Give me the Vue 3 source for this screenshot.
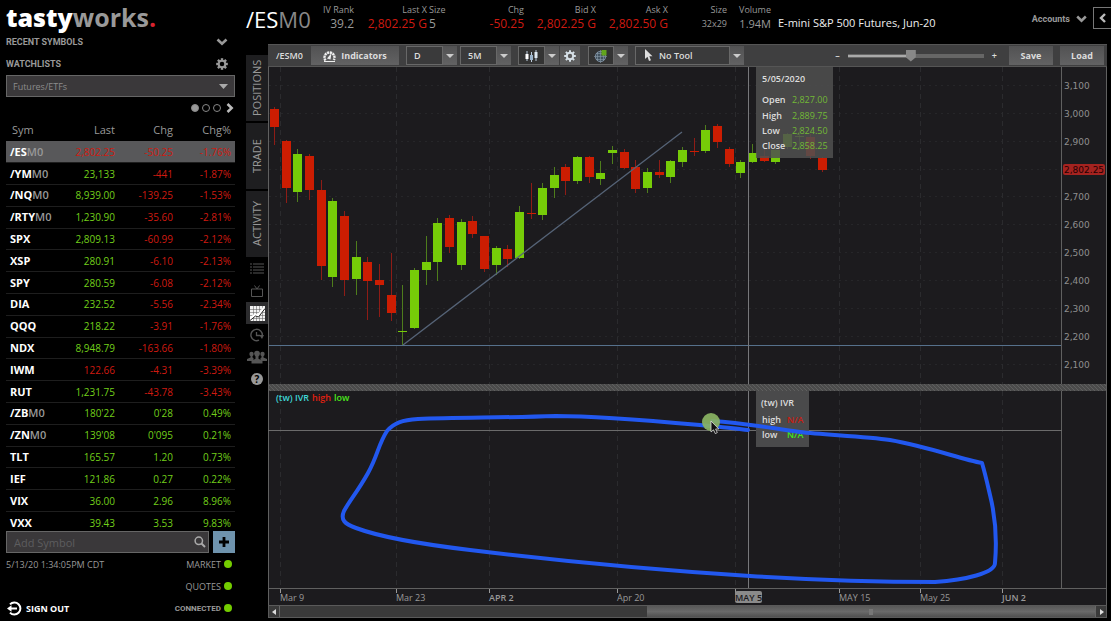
<script setup>
import { ref } from 'vue'

const watchlist = ref('Futures/ETFs')
const aggregation = ref('D')
const range = ref('5M')
const tool = ref('No Tool')
const zoom = ref(46)

const quotes = [
  ['/ES', 'M0', '2,802.25', '-50.25', '-1.76%', 'down', 'down'],
  ['/YM', 'M0', '23,133', '-441', '-1.87%', 'up', 'down'],
  ['/NQ', 'M0', '8,939.00', '-139.25', '-1.53%', 'up', 'down'],
  ['/RTY', 'M0', '1,230.90', '-35.60', '-2.81%', 'up', 'down'],
  ['SPX', '', '2,809.13', '-60.99', '-2.12%', 'up', 'down'],
  ['XSP', '', '280.91', '-6.10', '-2.13%', 'up', 'down'],
  ['SPY', '', '280.59', '-6.08', '-2.12%', 'up', 'down'],
  ['DIA', '', '232.52', '-5.56', '-2.34%', 'up', 'down'],
  ['QQQ', '', '218.22', '-3.91', '-1.76%', 'up', 'down'],
  ['NDX', '', '8,948.79', '-163.66', '-1.80%', 'up', 'down'],
  ['IWM', '', '122.66', '-4.31', '-3.39%', 'down', 'down'],
  ['RUT', '', '1,231.75', '-43.78', '-3.43%', 'up', 'down'],
  ['/ZB', 'M0', "180'22", "0'28", '0.49%', 'up', 'up'],
  ['/ZN', 'M0', "139'08", "0'095", '0.21%', 'up', 'up'],
  ['TLT', '', '165.57', '1.20', '0.73%', 'up', 'up'],
  ['IEF', '', '121.86', '0.27', '0.22%', 'up', 'up'],
  ['VIX', '', '36.00', '2.96', '8.96%', 'up', 'up'],
  ['VXX', '', '39.43', '3.53', '9.83%', 'up', 'up'],
].map(([root, month, last, chg, pct, lastDir, chgDir]) => ({ root, month, last, chg, pct, lastDir, chgDir }))

// direction, high, body top, body bottom, low
const candles = [
  ['r', 107, 109, 127, 145], ['r', 140, 141, 188, 203], ['g', 149, 154, 192, 202], ['r', 154, 156, 190, 200],
  ['r', 180, 190, 266, 280], ['g', 198, 201, 277, 287], ['r', 211, 216, 280, 296], ['g', 241, 257, 279, 295],
  ['r', 257, 262, 281, 320], ['r', 264, 280, 285, 317], ['r', 253, 295, 313, 321], ['g', 285, 331, 332, 346],
  ['g', 268, 270, 328, 329], ['g', 236, 262, 270, 285], ['g', 218, 223, 262, 281], ['r', 215, 218, 247, 253],
  ['g', 219, 222, 265, 270], ['r', 216, 221, 234, 238], ['r', 236, 236, 269, 272], ['g', 246, 248, 265, 275],
  ['r', 245, 249, 259, 267], ['g', 206, 212, 258, 259], ['r', 183, 213, 214, 219], ['g', 183, 188, 215, 220],
  ['g', 167, 175, 188, 198], ['r', 164, 167, 181, 195], ['g', 156, 157, 181, 184], ['r', 156, 157, 177, 183],
  ['g', 161, 173, 179, 185], ['g', 146, 150, 153, 164], ['r', 149, 152, 168, 169], ['r', 160, 167, 189, 193],
  ['g', 168, 172, 188, 193], ['r', 160, 172, 175, 178], ['g', 160, 161, 177, 183], ['g', 147, 150, 162, 167],
  ['r', 138, 151, 152, 156], ['g', 125, 130, 151, 153], ['r', 124, 126, 142, 148], ['r', 147, 149, 164, 167],
  ['g', 160, 162, 173, 178], ['g', 144, 153, 162, 163], ['r', 148, 156, 161, 162], ['g', 147, 150, 162, 164],
  ['g', 133, 134, 147, 149], ['g', 128, 136, 137, 150], ['r', 134, 137, 156, 159], ['r', 157, 158, 170, 172],
].map(([dir, high, top, bottom, low], i) => ({ dir, high, top, bottom, low, x: 274 + Math.round((i * 548) / 47) }))

const prices = [
  ['3,100', 86], ['3,000', 114], ['2,900', 142], ['2,800', 170], ['2,700', 197], ['2,600', 225],
  ['2,500', 253], ['2,400', 281], ['2,300', 309], ['2,200', 337], ['2,100', 365],
]
const dates = [
  ['Mar 9', 280], ['Mar 23', 396], ['APR 2', 489, true], ['Apr 20', 617],
  ['MAY 5', 735, true], ['MAY 15', 839], ['May 25', 920], ['JUN 2', 1002, true],
]
const ohlc = [['Open', '2,827.00', 103], ['High', '2,889.75', 119], ['Low', '2,824.50', 134], ['Close', '2,858.25', 149]]
</script>

<template>
  <div class="app">
    <aside class="sidebar">
      <div class="logo"><b>tasty</b><span>works</span><i>.</i></div>
      <button class="section">RECENT SYMBOLS
        <svg width="12" height="8" viewBox="0 0 12 8"><path d="M1.5 1.5 6 5.7l4.500-4.200" fill="none" stroke="#999" stroke-width="2.600" /></svg>
      </button>
      <button class="section">WATCHLISTS
        <svg width="12" height="12" viewBox="-6 -6 12 12">
          <circle r="3.300" fill="none" stroke="#999" stroke-width="2" />
          <path v-for="a in 8" :key="a" :transform="`rotate(${a * 45})`" d="M-1.200-5.800h2.400v2.400h-2.400z" fill="#999" />
        </svg>
      </button>
      <div class="list-select">
        <select v-model="watchlist" aria-label="Watchlist"><option>Futures/ETFs</option></select>
        <svg width="9" height="5" viewBox="0 0 9 5"><path d="M0 0h9L4.500 5z" fill="#aaa" /></svg>
      </div>
      <div class="pager">
        <button class="dot on" aria-label="Page 1"></button>
        <button class="dot" aria-label="Page 2"></button>
        <button class="dot" aria-label="Page 3"></button>
        <button class="next" aria-label="Next page">
          <svg width="8" height="10" viewBox="0 0 8 10"><path d="M1.500 1 5.700 5 1.500 9" fill="none" stroke="#bbb" stroke-width="2.500" /></svg>
        </button>
      </div>
      <div class="quotes">
        <table>
          <thead>
            <tr><th class="sym">Sym</th><th>Last</th><th>Chg</th><th>Chg%</th></tr>
          </thead>
          <tbody>
            <tr v-for="(q, i) in quotes" :key="q.root" :class="{ selected: i === 0 }">
              <td class="sym">{{ q.root }}<span>{{ q.month }}</span></td>
              <td :class="q.lastDir">{{ q.last }}</td>
              <td :class="q.chgDir">{{ q.chg }}</td>
              <td :class="q.chgDir">{{ q.pct }}</td>
            </tr>
          </tbody>
        </table>
      </div>
      <div class="add">
        <div class="add-box">
          <input type="text" placeholder="Add Symbol" aria-label="Add Symbol" />
          <svg width="12" height="12" viewBox="0 0 12 12"><circle cx="4.800" cy="4.800" r="3.700" fill="none" stroke="#aaa" stroke-width="1.500" /><path d="M7.500 7.500 11 11" stroke="#aaa" stroke-width="2" /></svg>
        </div>
        <button class="plus" aria-label="Add">
          <svg width="10" height="10" viewBox="0 0 10 10"><path d="M5 0v10M0 5h10" stroke="#000" stroke-width="2.800" /></svg>
        </button>
      </div>
      <div class="status"><span>5/13/20 1:34:05PM CDT</span><span class="state">MARKET<i></i></span></div>
      <div class="status"><span></span><span class="state">QUOTES<i></i></span></div>
      <div class="status">
        <button class="signout">
          <svg width="15" height="15" viewBox="0 0 15 15"><path d="M3 3.400A6 6 0 1 1 3 11.600" fill="none" stroke="#fff" stroke-width="2" /><path d="M10 7.500H2.500" stroke="#fff" stroke-width="2" /><path d="M4.500 4.200v6.600L0 7.500z" fill="#fff" /></svg>
          SIGN OUT
        </button>
        <span class="state narrow">CONNECTED<i></i></span>
      </div>
    </aside>

    <main>
      <header>
        <h1>/ES<span>M0</span></h1>
        <div class="stat iv"><small>IV Rank</small><b>39.2</b></div>
        <div class="stat last"><small>Last X</small><b class="down">2,802.25 G</b></div>
        <div class="stat lsize"><small>Size</small><b>5</b></div>
        <div class="stat chg"><small>Chg</small><b class="down">-50.25</b></div>
        <div class="stat px"><small>Bid X</small><b class="down">2,802.25 G</b></div>
        <div class="stat px"><small>Ask X</small><b class="down">2,802.50 G</b></div>
        <div class="stat size"><small>Size</small><b class="tiny">32x29</b></div>
        <div class="stat vol"><small>Volume</small><b>1.94M</b></div>
        <div class="name">E-mini S&amp;P 500 Futures, Jun-20</div>
        <button class="accounts">Accounts
          <svg width="11" height="8" viewBox="0 0 11 8"><path d="M1.200 1.500 5.500 5.700l4.300-4.200" fill="none" stroke="#999" stroke-width="2.500" /></svg>
        </button>
        <button class="collapse" aria-label="Show panel">
          <svg width="7" height="10" viewBox="0 0 7 10"><path d="M6 1 2 5l4 4" fill="none" stroke="#bbb" stroke-width="2.400" /></svg>
        </button>
      </header>

      <div class="work">
        <nav>
          <button class="tab">POSITIONS</button>
          <button class="tab">TRADE</button>
          <button class="tab">ACTIVITY</button>
          <button class="icon" aria-label="Grid">
            <svg width="14" height="12" viewBox="0 0 14 12"><path d="M0 1h2M3 1h11M0 4h2M3 4h11M0 7h2M3 7h11M0 10h2M3 10h11" stroke="#555" /></svg>
          </button>
          <button class="icon" aria-label="Video">
            <svg width="12" height="12" viewBox="0 0 12 12"><path d="M.500 4h11v7.500H.500zM3.500.500 6 4 8.500.500" fill="none" stroke="#555" /></svg>
          </button>
          <button class="icon active" aria-label="Chart">
            <svg width="15" height="15" viewBox="0 0 15 15"><path d="M0 0h15v15H0z" fill="#f2f2f2" /><path d="M3.500 0v15M6.500 0v15M9.500 0v15M12.500 0v15M0 3.500h15M0 6.500h15M0 9.500h15M0 12.500h15" stroke="#555" stroke-width=".500" /><path d="m0 13 5-4 3 1 6-8" fill="none" stroke="#fff" stroke-width="2.500" /><path d="m0 14.500 5.500-4.500 3 1L15 2.500" fill="none" stroke="#222" /></svg>
          </button>
          <button class="icon" aria-label="History">
            <svg width="14" height="14" viewBox="0 0 14 14"><path d="M12.300 7.500A5.700 5.700 0 1 0 9 12.200" fill="none" stroke="#555" stroke-width="1.400" /><path d="M9.300 7H14l-2 4z" fill="#555" /><path d="M6.500 4v3.500H10" fill="none" stroke="#555" stroke-width="1.300" /></svg>
          </button>
          <button class="icon" aria-label="People">
            <svg width="20" height="14" viewBox="0 0 20 14" fill="#555"><circle cx="4.500" cy="4" r="2.200" /><circle cx="15.500" cy="4" r="2.200" /><path d="M0 11V9l3.500-1.500V5h2v2.500l1 .500V11zM20 11V9l-3.500-1.500V5h-2v2.500l-1 .500V11z" /><circle cx="10" cy="3.600" r="2.900" /><path d="M4.500 13.500v-2.700l4-2V6h3v2.800l4 2v2.700z" /></svg>
          </button>
          <button class="icon" aria-label="Help"><span class="help">?</span></button>
        </nav>

        <section class="panel">
          <div class="toolbar">
            <span class="ticker">/ESM0</span>
            <button class="btn indicators">
              <svg width="13" height="12" viewBox="0 0 13 12"><path d="M2.500 10.500A5 5 0 1 1 10.800 10" fill="none" stroke="#eee" stroke-width="2.400" stroke-dasharray="2.200 .600" /><path d="M4 8.500 8.500 3l-1 6.500z" fill="#eee" /><path d="M1 11.500h11" stroke="#eee" /></svg>
              Indicators
            </button>
            <div class="combo agg">
              <select v-model="aggregation" aria-label="Aggregation"><option>D</option></select>
              <span class="arrow"></span>
            </div>
            <div class="combo rng">
              <select v-model="range" aria-label="Range"><option>5M</option></select>
              <span class="arrow"></span>
            </div>
            <div class="split style">
              <button class="face" aria-label="Chart style">
                <svg width="13" height="12" viewBox="0 0 13 12"><path d="M2 1v10M6.500 2v10M11 0v11" stroke="#bcd" /><path d="M.500 4h3v5h-3z" fill="#fff" /><path d="M5 5h3v5H5z" fill="#9ab4cc" /><path d="M9.500 2h3v6h-3z" fill="#dde8f2" /></svg>
              </button>
              <button class="arrow" aria-label="More styles"></button>
            </div>
            <button class="btn gear" aria-label="Settings">
              <svg width="12" height="12" viewBox="-6 -6 12 12"><circle r="3.200" fill="none" stroke="#d6e0e8" stroke-width="2" /><path v-for="a in 8" :key="a" :transform="`rotate(${a * 45})`" d="M-1-5.800h2v2.400h-2z" fill="#d6e0e8" /></svg>
            </button>
            <div class="split cross">
              <button class="face" aria-label="Crosshair">
                <svg width="14" height="14" viewBox="0 0 14 14"><circle cx="6.500" cy="7.500" r="5.200" fill="#42525f" stroke="#789" /><path d="M6.500 1v13M0 7.500h13M3.500 3v9M9.500 3v9M2 4.500h9M2 10.500h9" stroke="#8a9aa8" stroke-width=".600" /><path d="M7.500 1h5v5.500h-5z" fill="#62a51c" /></svg>
              </button>
              <button class="arrow" aria-label="More crosshairs"></button>
            </div>
            <div class="combo tool">
              <svg class="pointer" width="9" height="13" viewBox="0 0 9 13"><path d="M1 0v10l2.500-2.200L5 12l2-.800-1.700-4H8.500z" fill="#ddd" /></svg>
              <select v-model="tool" aria-label="Drawing tool"><option>No Tool</option></select>
              <span class="arrow"></span>
            </div>
            <div class="zoomer">
              <button aria-label="Zoom out">–</button>
              <input v-model="zoom" type="range" min="0" max="100" aria-label="Zoom" />
              <button aria-label="Zoom in">+</button>
            </div>
            <button class="btn action">Save</button>
            <button class="btn action">Load</button>
          </div>

          <svg class="chart" viewBox="268 67 839 538" role="img" aria-label="/ESM0 price chart">
            <defs>
              <pattern id="grip" width="4" height="4" patternUnits="userSpaceOnUse"><path d="M0 0h4v4H0z" fill="#4b4b4b" /><path d="m0 0 4 4" stroke="#606060" /></pattern>
            </defs>
            <path d="M268 67h839v538H268z" fill="#1c1b1e" />
            <g stroke="#2b2b2e">
              <path v-for="p in prices" :key="p[0]" :d="`M269 ${p[1] - 0.5}H1062`" stroke-dasharray="2 4" opacity=".7" />
              <path v-for="d in dates" :key="d[0]" :d="`M${d[1] + 0.5} 67V588`" stroke-dasharray="5 4" />
            </g>
            <g v-for="c in candles" :key="c.x" :class="c.dir">
              <path :d="`M${c.x + 0.5} ${c.high}V${c.low}`" class="wick" />
              <rect :x="c.x - 4" :y="c.top" width="9" :height="c.bottom - c.top" class="body" />
            </g>
            <path d="M403 345 682 132" stroke="#566478" stroke-width="1.300" />
            <path d="M268 345.500H1062" stroke="#56718c" />
            <path d="M748.500 67V588" stroke="#77777a" />
            <path d="M268 384h839v7H268z" fill="url(#grip)" />
            <path d="M268 391V588.500H1107M268.500 67V605M1061.500 67V384M1061.500 391V588.500M1106.500 67V605" fill="none" stroke="#606060" />
            <path d="M268 430.500H1062" stroke="#6b6b6b" />

            <g class="axis">
              <template v-for="p in prices" :key="p[0]">
                <text v-if="p[0] !== '2,800'" x="1064" :y="p[1] + 3">{{ p[0] }}</text>
              </template>
            </g>
            <rect x="1063" y="164" width="42" height="11" rx="2" fill="#a52320" />
            <text x="1064" y="173" class="tag">2,802.25</text>

            <g>
              <path v-for="d in dates" :key="d[0]" :d="`M${d[1] + 0.5} 589v4`" stroke="#999" />
              <rect x="735" y="591" width="27" height="12" rx="2" fill="#8a8a8a" />
              <text v-for="d in dates" :key="d[0]" :x="d[1]" y="601" :class="['date', { major: d[2], current: d[0] === 'MAY 5' }]">{{ d[0] }}</text>
            </g>

            <g class="legend">
              <text x="276" y="401" fill="#3fd6d6">(tw) IVR</text>
              <text x="312" y="401" fill="#e02010">high</text>
              <text x="334" y="401" fill="#4be81c">low</text>
            </g>

            <rect x="756" y="67" width="77" height="91" fill="#505050" opacity=".85" />
            <g class="tip">
              <text x="762" y="82">5/05/2020</text>
              <template v-for="o in ohlc" :key="o[0]">
                <text x="762" :y="o[2]">{{ o[0] }}</text>
                <text x="792" :y="o[2]" class="value">{{ o[1] }}</text>
              </template>
            </g>
            <rect x="756" y="391" width="53" height="56" fill="#4a4a4b" />
            <g class="tip">
              <text x="761" y="406">(tw) IVR</text>
              <text x="762" y="423">high</text><text x="787" y="423" class="high">N/A</text>
              <text x="762" y="438">low</text><text x="787" y="438" class="low">N/A</text>
            </g>

            <path
              d="M748 430 C735 428 722 427 700 425 C655 421 590 416 556 416 C500 418 455 417 418 419 C402 420 394 423 387 431 C378 445 378 455 368 473 C358 491 350 500 344 511 C340 520 345 524 356 528 C380 537 420 544 470 550 C560 561 640 569 750 576 C815 580 880 582 935 582 C965 580 995 573 995 563 C997 540 995 515 990 495 C987 482 985 473 982 463 C960 459 930 447 890 440 C865 436 825 435 800 432 C770 428 745 423 712 421"
              fill="none" stroke="#2258ef" stroke-width="4" stroke-linecap="round" stroke-linejoin="round" />
            <circle cx="711" cy="422" r="9" fill="#8ab463" opacity=".92" />
            <path d="M711 421v11l2.500-2.200 1.800 3.800 2-1-1.700-3.600h3.200z" fill="#111" stroke="#ddd" stroke-width=".800" />
          </svg>

          <div class="scroll">
            <button aria-label="Scroll left"><svg width="5" height="6" viewBox="0 0 5 6"><path d="M4 0v6L0 3z" fill="#ddd" /></svg></button>
            <div class="track"><div class="thumb"><i></i></div></div>
            <button aria-label="Scroll right"><svg width="5" height="6" viewBox="0 0 5 6"><path d="M1 0v6l4-3z" fill="#ddd" /></svg></button>
          </div>
        </section>
      </div>
    </main>
  </div>
</template>

<style>
body { background: #000; }
</style>

<style scoped>
.app { display: flex; min-height: 100vh; background: #000; color: #999; font-family: "Open Sans", "Noto Sans", sans-serif; font-size: 10px; overflow: hidden; }
.app *, .app { box-sizing: border-box; }
button { padding: 0; border: 0; background: none; color: inherit; font: inherit; cursor: pointer; }
select, input { font: inherit; color: inherit; appearance: none; border-radius: 0; margin: 0; }
svg { display: block; flex: none; }
.up { color: #72cf1a; }
.down { color: #cf1a10; }

.sidebar { flex: 0 0 246px; padding: 0 11px 0 6px; display: flex; flex-direction: column; }
.logo { height: 34px; margin-bottom: -3px; font-size: 25px; line-height: 34px; font-weight: 700; white-space: nowrap; color: #999; }
.logo b { color: #fff; }
.logo i { color: #d8232f; font-style: normal; }
.section { display: flex; align-items: center; justify-content: space-between; height: 22px; padding-right: 7px; font-family: Roboto, "Open Sans", sans-serif; font-size: 9px; font-weight: 700; color: #999; }
.list-select { position: relative; height: 22px; }
.list-select select { width: 100%; height: 22px; padding: 0 6px; border: 1px solid #666; background: #3a383a; color: #8c8c8c; font-size: 9px; }
.list-select svg { position: absolute; right: 7px; top: 9px; pointer-events: none; }
.pager { display: flex; align-items: center; justify-content: flex-end; gap: 3px; height: 22px; padding-right: 1px; }
.dot { width: 8px; height: 8px; border: 1px solid #888; border-radius: 50%; }
.dot.on { background: #999; }
.next { margin-left: 2px; }
.quotes { height: 412px; overflow: hidden; }
table { width: 100%; height: 414px; border-collapse: collapse; table-layout: fixed; }
thead tr { height: 22px; }
th, td { padding: 0 4px 0 0; text-align: right; line-height: 18px; font-weight: 400; }
th { font-size: 11px; color: #999; width: 58px; }
td { border-top: 1px solid #1e1e1e; }
th.sym { width: auto; padding-left: 6px; text-align: left; }
td.sym { padding-left: 4px; text-align: left; font-size: 11px; font-weight: 700; color: #fff; }
td.sym span { color: #999; font-weight: 600; }
.selected td { background: #58585a; border-color: #58585a; }
.add { display: flex; gap: 4px; }
.add-box { flex: 1; display: flex; align-items: center; padding-right: 2px; border: 1px solid #666; background: #3a383a; }
.add input { flex: 1; min-width: 0; height: 20px; padding: 0 7px; border: 0; background: none; font-size: 11px; }
.add input::placeholder { color: #5d5d5f; opacity: 1; }
.plus { display: grid; place-items: center; width: 22px; height: 22px; background: #6f93ad; }
.status { display: flex; align-items: center; justify-content: space-between; height: 22px; font-size: 9px; }
.state { display: flex; align-items: center; gap: 3px; padding-right: 3px; }
.state i { width: 8px; height: 8px; border-radius: 50%; background: #74cc00; }
.narrow { font-family: Roboto, "Open Sans", sans-serif; font-size: 8px; font-weight: 700; }
.signout { display: flex; align-items: center; gap: 4px; margin-left: 1px; color: #fff; font-weight: 700; }

main { flex: 1; min-width: 0; }
header { display: flex; height: 44px; padding-top: 3px; white-space: nowrap; }
h1 { margin: 0; flex: 0 0 66px; font-size: 22px; line-height: 32px; font-weight: 400; color: #fff; }
h1 span { color: #888; }
.stat { display: flex; flex-direction: column; align-items: flex-end; flex: none; }
.stat small { font-size: 9px; line-height: 13px; }
.stat b { font-size: 12px; line-height: 15px; font-weight: 400; }
.stat b.tiny { font-size: 9px; }
.iv { width: 42px; }
.last { width: 73px; }
.lsize { width: 20px; align-items: flex-start; padding-left: 2px; }
.chg { width: 77px; }
.px { width: 72px; }
.size { width: 59px; }
.vol { width: 44px; }
.vol b { font-size: 11px; }
.name { margin-left: 7px; padding-top: 11px; font-size: 11px; line-height: 18px; color: #eee; }
.accounts { display: flex; align-items: center; gap: 6px; height: 32px; margin-left: auto; font-family: Roboto, "Open Sans", sans-serif; font-size: 9px; font-weight: 700; }
.collapse { display: grid; place-items: center; width: 18px; height: 22px; margin: 4px 0 0 6px; border: 1px solid #777; border-right: 0; }

.work { display: flex; }
nav { flex: 0 0 22px; display: flex; flex-direction: column; padding-top: 11px; }
.tab { writing-mode: vertical-rl; transform: rotate(180deg); width: 22px; height: 66px; margin-bottom: 2px; background: #1e1e20; color: #999; font-size: 11px; line-height: 22px; }
.icon { display: grid; place-items: center; height: 22px; }
.tab + .icon { margin-top: -1px; }
.active { background: #2c2c2e; }
.help { width: 12px; height: 12px; border-radius: 50%; background: #999; color: #000; font-size: 10px; line-height: 12px; font-weight: 700; }

.panel { flex: 1; min-width: 0; margin-right: 4px; }
.toolbar { display: flex; height: 23px; padding: 1px 3px 1px 0; background: #3f3f40; border-bottom: 1px solid #555; border-top: 1px solid #555; font-size: 9px; font-weight: 600; color: #ddd; }
.ticker { width: 43px; padding-left: 8px; line-height: 20px; }
.btn, .arrow { background: linear-gradient(#525253, #626263); }
.btn { display: flex; align-items: center; justify-content: center; color: #ddd; font-weight: 700; }
.indicators { width: 88px; gap: 5px; margin-right: 7px; }
.combo { position: relative; display: flex; flex: none; margin-right: 3px; }
.combo select { flex: 1; min-width: 0; padding: 0 7px; border: 1px solid #686868; background: #3a3a3b; }
.arrow { display: grid; place-items: center; width: 14px; }
.arrow::after { content: ""; border: 4px solid transparent; border-top-color: #ccc; border-bottom: 0; }
.agg { width: 51px; }
.rng { width: 51px; }
.split { display: flex; flex: none; }
.face { flex: 1; display: grid; place-items: center; border: 1px solid #686868; background: #333; }
.style { width: 41px; margin-left: 4px; }
.gear { width: 20px; margin: 0 8px 0 1px; }
.cross { width: 40px; margin-right: 7px; }
.tool { width: 109px; }
.combo.tool select { padding-left: 23px; }
.pointer { position: absolute; left: 9px; top: 3px; }
.zoomer { flex: 1; display: flex; align-items: center; justify-content: flex-end; gap: 8px; margin-right: 12px; }
.zoomer input { width: 136px; height: 12px; background: linear-gradient(#aaa, #aaa) left 5px / 47% 2px no-repeat, linear-gradient(#666, #666) 0 4px / 100% 4px no-repeat; }
.zoomer input::-webkit-slider-thumb { appearance: none; width: 10px; height: 12px; background: #888; clip-path: polygon(0 0, 100% 0, 100% 65%, 50% 100%, 0 65%); }
.action { width: 44px; }
.action + .action { margin-left: 7px; }

.chart { width: 100%; height: auto; }
.r .wick { stroke: #8e1c16; }
.g .wick { stroke: #4e7d1c; }
.r .body { fill: #cc1d02; }
.g .body { fill: #76cc08; }
.axis text, .tag { font-family: "DejaVu Sans", sans-serif; font-size: 9px; fill: #8f8f8f; }
.tag { fill: #240000; }
.date { font-size: 9px; fill: #999; }
.major { font-weight: 600; }
.current { fill: #1c1b1e; }
.legend { font-size: 9px; font-weight: 600; }
.tip text { font-size: 9px; font-weight: 600; fill: #ddd; }
.tip .value { font-weight: 400; fill: #72b836; }
.tip .high { fill: #c81d12; }
.tip .low { fill: #3fe820; }
.scroll { display: flex; height: 13px; border: 1px solid #5a5a5a; background: #3a3a3a; }
.scroll button { display: grid; place-items: center; width: 10px; }
.track { flex: 1; border: solid #666; border-width: 0 1px; }
.thumb { display: grid; place-items: center; width: 55%; height: 100%; margin-left: auto; background: linear-gradient(#585858, #6a6a6a, #505050); }
.thumb i { width: 4px; height: 6px; background: #777; }
</style>
